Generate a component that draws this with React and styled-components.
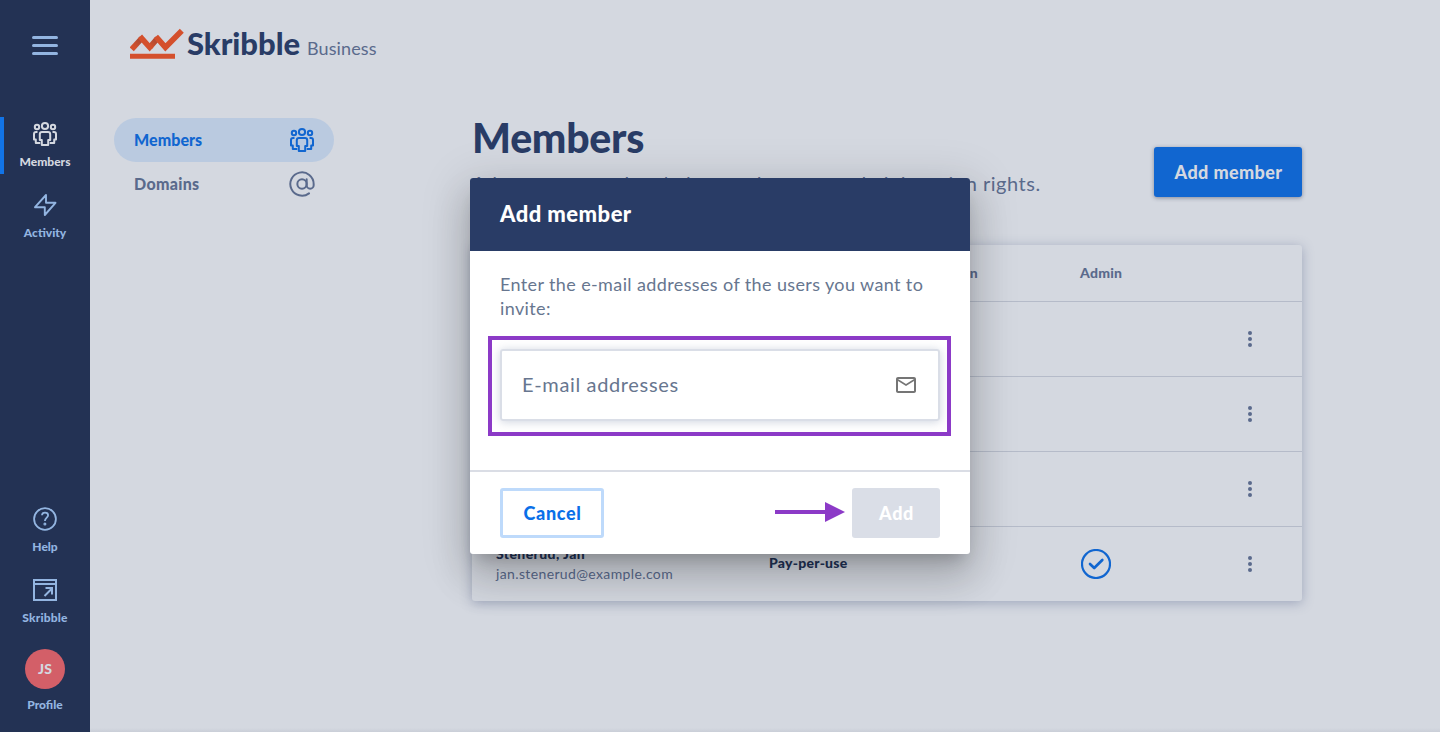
import React from "react";
import styled, { createGlobalStyle, css } from "styled-components";
import { AtSign } from "lucide-react";

const Global = createGlobalStyle`
  * { box-sizing: border-box; }
  body { margin: 0; background: #d4d8e0; font-family: Lato, "Liberation Sans", sans-serif; overflow: hidden; }
  #root { height: 100vh; }
`;

const Page = styled.div`
  position: relative;
  display: flex;
  height: 732px;
  &::after {
    content: "";
    position: absolute;
    inset: auto 0 0 0;
    height: 4px;
    background: linear-gradient(transparent, rgba(40, 50, 80, 0.06));
  }
`;

const Sidebar = styled.nav`
  display: flex;
  flex-direction: column;
  align-items: center;
  flex: 0 0 90px;
  background: #233254;
  padding-top: 36px;
`;

const Burger = styled.div`
  display: flex;
  flex-direction: column;
  gap: 5px;
  margin-bottom: 62px;
  i { width: 26px; height: 3px; border-radius: 1.5px; background: #93b5e1; }
`;

const NavItem = styled.a`
  display: flex;
  flex-direction: column;
  align-items: center;
  width: 90px;
  height: 57px;
  margin-bottom: 14px;
  padding-top: 5px;
  color: ${(p) => (p.$active ? "#d4d8e0" : "#93b5e1")};
  border-left: 4px solid ${(p) => (p.$active ? "#1274e7" : "transparent")};
  border-right: 4px solid transparent;
  border-radius: 0 2px 2px 0;
  svg { display: block; margin: ${(p) => (p.$active ? "-1px 0" : "0")}; }
`;

const NavLabel = styled.span`
  margin-top: 8px;
  font-size: 12px;
  line-height: 16px;
  font-weight: 900;
  letter-spacing: ${(p) => p.$ls || 0}px;
  white-space: nowrap;
`;

const Spacer = styled.div`
  flex: 1;
`;

const Profile = styled.div`
  display: flex;
  flex-direction: column;
  align-items: center;
  margin: 5px 0 19px;
  color: #93b5e1;
`;

const Avatar = styled.div`
  display: grid;
  place-items: center;
  width: 40px;
  height: 40px;
  padding-bottom: 1px;
  border-radius: 50%;
  background: #d35f68;
  color: #d4d8e0;
  font-size: 14px;
  font-weight: 900;
`;

const Main = styled.main`
  flex: 1;
  padding: 28px 138px 0 24px;
`;

const Brand = styled.header`
  display: flex;
  align-items: flex-start;
  height: 90px;
  padding-left: 16px;
  color: #293c66;
`;

const BrandMark = styled.svg`
  flex: none;
  margin-right: 3px;
`;

const Wordmark = styled.div`
  display: flex;
  align-items: baseline;
  margin-top: -1px;
`;

const BrandName = styled.span`
  font-size: 31px;
  line-height: 32px;
  font-weight: 900;
  letter-spacing: -0.05px;
`;

const BrandTag = styled.span`
  margin-left: 7px;
  font-size: 18px;
  letter-spacing: 0.1px;
  color: #5a6a8c;
`;

const Columns = styled.div`
  display: flex;
  gap: 138px;
`;

const Menu = styled.div`
  flex: 0 0 220px;
`;

const MenuItem = styled.a`
  display: flex;
  align-items: center;
  justify-content: space-between;
  height: 44px;
  padding: 0 19px 0 20px;
  border-radius: 22px;
  font-size: 16px;
  font-weight: 900;
  color: ${(p) => (p.$active ? "#1166d0" : "#5a6a8c")};
  background: ${(p) => (p.$active ? "#bacae0" : "transparent")};
  letter-spacing: ${(p) => p.$ls || 0}px;
  span { padding-bottom: 1px; }
  svg { display: block; }
`;

const DomainIcon = styled(AtSign)`
  margin-right: -1px;
`;

const Content = styled.section`
  flex: 0 0 830px;
`;

const ContentHead = styled.div`
  display: flex;
  justify-content: space-between;
  height: 127px;
`;

const Title = styled.h1`
  margin: -5px 0 0;
  font-size: 41px;
  line-height: 50px;
  font-weight: 900;
  letter-spacing: -0.25px;
  color: #293c66;
`;

const Subtitle = styled.p`
  margin: 8px 0 0;
  font-size: 20px;
  line-height: 24px;
  color: #5a6a8c;
  white-space: nowrap;
  letter-spacing: 0.51px;
`;

const buttonBase = css`
  display: flex;
  align-items: center;
  justify-content: center;
  height: 50px;
  border: 0;
  border-radius: 3px;
  font: 900 18px Lato, sans-serif;
  letter-spacing: 0.38px;
  padding: 0 0 1px 1px;
  white-space: nowrap;
`;

const PrimaryButton = styled.button`
  ${buttonBase}
  width: 148px;
  margin-top: 29px;
  background: #1166d0;
  color: #d4d8e0;
  box-shadow: 0 1px 4px rgba(30, 40, 70, 0.45);
`;

const Table = styled.div`
  border-radius: 3px;
  background: #d4d8e0;
  box-shadow: 0 2px 12px rgba(70, 85, 130, 0.38);
`;

const Row = styled.div`
  display: grid;
  grid-template-columns: 273px 311px 131px 1fr;
  align-items: center;
  height: ${(p) => (p.$head ? 57 : p.$last ? 74 : 75)}px;
  padding-left: 24px;
  border-bottom: ${(p) => (p.$last ? "0" : "1px solid #b5bbc9")};
  font-size: 14px;
  font-weight: 900;
  letter-spacing: 0.25px;
  color: ${(p) => (p.$head ? "#5a6a8c" : "#223358")};
  svg { display: block; margin-left: 1px; }
`;

const HeadCell = styled.span`
  justify-self: ${(p) => (p.$end ? "end" : "start")};
  margin-right: ${(p) => (p.$end ? 102 : 0)}px;
  padding-bottom: 1px;
`;

const Plan = styled.span`
  padding-bottom: 3px;
`;

const Person = styled.div`
  line-height: 20px;
  letter-spacing: 0.4px;
  small { display: block; font-size: 14px; font-weight: 400; color: #5a6a8c; letter-spacing: 0.37px; }
`;

const Kebab = styled.div`
  display: flex;
  flex-direction: column;
  gap: 2px;
  margin-left: 37px;
  i { width: 4px; height: 4px; border-radius: 50%; background: #5a6a8c; }
`;

const Dialog = styled.div`
  position: absolute;
  z-index: 2;
  left: 470px;
  top: 178px;
  width: 500px;
  height: 376px;
  display: flex;
  flex-direction: column;
  border-radius: 3px;
  overflow: hidden;
  background: #fff;
  box-shadow: 0 11px 15px -7px rgba(0, 0, 0, 0.2), 0 24px 38px 3px rgba(0, 0, 0, 0.14), 0 9px 46px 8px rgba(0, 0, 0, 0.12);
`;

const DialogTitle = styled.h2`
  margin: 0;
  height: 73px;
  padding: 0 30px;
  background: #293c66;
  color: #fff;
  font-size: 22px;
  font-weight: 900;
  letter-spacing: 0.45px;
  line-height: 72px;
`;

const DialogBody = styled.div`
  position: relative;
  flex: 1;
  padding: 21px 30px 0;
`;

const Prompt = styled.p`
  margin: 0 0 29px;
  font-size: 18px;
  line-height: 24px;
  color: #67768f;
  white-space: nowrap;
  letter-spacing: 0.38px;
`;

const Field = styled.div`
  display: flex;
  align-items: center;
  justify-content: space-between;
  height: 72px;
  padding: 0 20px;
  border: 2px solid #dadee7;
  border-radius: 3px;
  box-shadow: 0 1px 10px rgba(80, 100, 140, 0.28);
  font-size: 20px;
  letter-spacing: 0.65px;
  color: #67768f;
  span { padding-bottom: 2px; }
`;

const Highlight = styled.div`
  position: absolute;
  left: 18px;
  top: 85px;
  width: 463px;
  height: 100px;
  border: 4px solid #8c3ac7;
`;

const DialogFooter = styled.div`
  display: flex;
  align-items: center;
  height: 84px;
  padding: 0 30px;
  border-top: 2px solid #dadde5;
`;

const CancelButton = styled.button`
  ${buttonBase}
  width: 104px;
  border: 3px solid #bedafb;
  background: #fff;
  color: #0a6fe8;
  letter-spacing: 0.65px;
`;

const AddButton = styled.button`
  ${buttonBase}
  width: 88px;
  background: #dadee7;
  color: #fff;
  letter-spacing: 0.6px;
`;

const Arrow = styled.svg`
  margin: -2px 7px 0 auto;
`;

const Team = () => (
  <svg width="26" height="26" viewBox="0 0 26 26" fill="none" stroke="currentColor" strokeWidth="2" strokeLinejoin="round">
    <circle cx="13" cy="5" r="3.1" />
    <circle cx="5" cy="6" r="2.2" />
    <circle cx="21" cy="6" r="2.2" />
    <path d="M10 11h6q2.200 0 2.200 2.200V19h-2v5H9.800v-5h-2v-5.800Q7.800 11 10 11z" />
    <path d="M5.500 11H4q-2 0-2 2v5.500h1.800V22h4.500M20.500 11H22q2 0 2 2v5.500h-1.800V22h-4.500" />
  </svg>
);

const Bolt = () => (
  <svg width="24" height="24" viewBox="0 0 24 24" fill="none" stroke="currentColor" strokeWidth="1.9" strokeLinejoin="round">
    <path d="M13 2 2 14.200h9.800V22L22.500 9.800H13z" />
  </svg>
);

const Help = () => (
  <svg width="24" height="24" viewBox="0 0 24 24" fill="none" stroke="currentColor" strokeWidth="1.8">
    <circle cx="12" cy="12" r="10.900" />
    <path d="M9 8.200C9.100 6.500 10.400 5.700 12 5.700c1.800 0 3.100 1 3.100 2.500 0 2.500-3.200 2.400-3.200 5.900" />
    <circle cx="11.900" cy="17" r=".6" />
  </svg>
);

const AppWindow = () => (
  <svg width="24" height="24" viewBox="0 0 24 24" fill="none" stroke="currentColor" strokeWidth="2">
    <path d="M1 2h22v20H1zM1 6h22M11.500 18l7-7M12.500 10H19v6.500" />
  </svg>
);

const Check = () => (
  <svg width="30" height="30" viewBox="0 0 30 30" fill="none" stroke="#1166d0">
    <circle cx="15" cy="15" r="14" strokeWidth="2.200" />
    <path d="M9 15l4.200 4L21.300 11" strokeWidth="2.700" strokeLinecap="round" strokeLinejoin="round" />
  </svg>
);

const Mail = () => (
  <svg width="24" height="24" viewBox="0 0 24 24" fill="#757575">
    <path d="M22 6c0-1.100-.9-2-2-2H4c-1.100 0-2 .9-2 2v12c0 1.100.9 2 2 2h16c1.100 0 2-.9 2-2V6zm-2 0l-8 5-8-5h16zm0 12H4V8l8 5 8-5v10z" />
  </svg>
);

const RowMenu = () => (
  <Kebab><i /><i /><i /></Kebab>
);

const Logo = () => (
  <BrandMark width="54" height="32" viewBox="0 0 54 32" fill="none" stroke="#d4502d" strokeWidth="5.600">
    <defs>
      <linearGradient id="fold1" gradientUnits="userSpaceOnUse" x1="4" y1="19" x2="11" y2="11">
        <stop offset="0" stopColor="#d4502d" />
        <stop offset="1" stopColor="#a84a35" />
      </linearGradient>
      <linearGradient id="fold2" gradientUnits="userSpaceOnUse" x1="20" y1="19" x2="27" y2="11">
        <stop offset="0" stopColor="#d4502d" />
        <stop offset="1" stopColor="#a84a35" />
      </linearGradient>
    </defs>
    <path d="M1.700 21.300 11.700 10.300" stroke="url(#fold1)" />
    <path d="M19.700 19.300 27.500 10.300" stroke="url(#fold2)" />
    <path d="M10 8.400 11.700 10.300 19.700 19.300 21.300 17.500M25.900 8.500 27.500 10.300 35.400 19.300 51.800 2.800" />
    <path d="M0 28.300h45" strokeWidth="5" />
  </BrandMark>
);

export default function App() {
  return (
    <Page>
      <Global />
      <Sidebar>
        <Burger><i /><i /><i /></Burger>
        <NavItem $active>
          <Team />
          <NavLabel>Members</NavLabel>
        </NavItem>
        <NavItem>
          <Bolt />
          <NavLabel>Activity</NavLabel>
        </NavItem>
        <Spacer />
        <NavItem>
          <Help />
          <NavLabel>Help</NavLabel>
        </NavItem>
        <NavItem>
          <AppWindow />
          <NavLabel $ls={0.2}>Skribble</NavLabel>
        </NavItem>
        <Profile>
          <Avatar>JS</Avatar>
          <NavLabel>Profile</NavLabel>
        </Profile>
      </Sidebar>
      <Main>
        <Brand>
          <Logo />
          <Wordmark>
            <BrandName>Skribble</BrandName>
            <BrandTag>Business</BrandTag>
          </Wordmark>
        </Brand>
        <Columns>
          <Menu>
            <MenuItem $active $ls={0.05}><span>Members</span><Team /></MenuItem>
            <MenuItem $ls={0.3}><span>Domains</span><DomainIcon size={28} strokeWidth={1.7} /></MenuItem>
          </Menu>
          <Content>
            <ContentHead>
              <div>
                <Title>Members</Title>
                <Subtitle>Adapt your members' plans and manage administration rights.</Subtitle>
              </div>
              <PrimaryButton>Add member</PrimaryButton>
            </ContentHead>
            <Table>
              <Row $head>
                <span />
                <HeadCell $end>Plan</HeadCell>
                <HeadCell>Admin</HeadCell>
              </Row>
              {[0, 1, 2].map((n) => (
                <Row key={n}><span /><span /><span /><RowMenu /></Row>
              ))}
              <Row $last>
                <Person>Stenerud, Jan<small>jan.stenerud@example.com</small></Person>
                <Plan>Pay-per-use</Plan>
                <Check />
                <RowMenu />
              </Row>
            </Table>
          </Content>
        </Columns>
      </Main>
      <Dialog>
        <DialogTitle>Add member</DialogTitle>
        <DialogBody>
          <Prompt>Enter the e-mail addresses of the users you want to<br />invite:</Prompt>
          <Field><span>E-mail addresses</span><Mail /></Field>
          <Highlight />
        </DialogBody>
        <DialogFooter>
          <CancelButton>Cancel</CancelButton>
          <Arrow width="70" height="20" viewBox="0 0 70 20" fill="#8c3ac7">
            <path d="M0 8h50V0l20 10-20 10v-8H0z" />
          </Arrow>
          <AddButton>Add</AddButton>
        </DialogFooter>
      </Dialog>
    </Page>
  );
}
